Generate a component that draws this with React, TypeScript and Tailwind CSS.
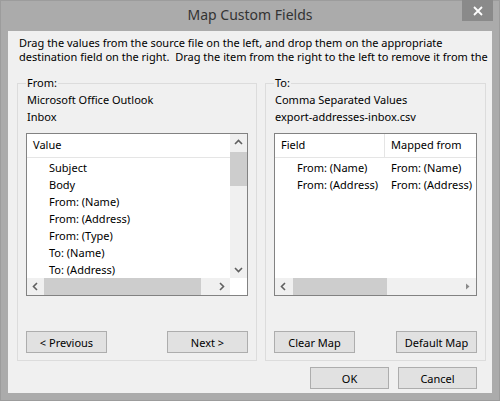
import React from "react";

const font = "font-['Segoe_UI','Noto_Sans',sans-serif]";

function Chevron({ dir, className = "" }: { dir: "up" | "down" | "left" | "right"; className?: string }) {
  const pts = {
    up: "1,6 4.5,2.5 8,6",
    down: "1,3 4.5,6.5 8,3",
    left: "6,1 2.5,4.5 6,8",
    right: "3,1 6.5,4.5 3,8",
  }[dir];
  return (
    <svg width="9" height="9" viewBox="0 0 9 9" className={className}>
      <polyline points={pts} fill="none" stroke="#606060" strokeWidth="1.6" />
    </svg>
  );
}

function HScroll({ thumbLeft, thumbWidth, dimRight }: { thumbLeft: number; thumbWidth: number; dimRight?: boolean }) {
  return (
    <div className="h-[17px] bg-[#f0f0f0] flex items-center flex-1">
      <div className="w-[17px] flex justify-center"><Chevron dir="left" /></div>
      <div className="flex-1 h-full relative">
        <div className="absolute top-0 h-full bg-[#cdcdcd]" style={{ left: thumbLeft, width: thumbWidth }} />
      </div>
      <div className="w-[17px] flex justify-center">
        {dimRight ? (
          <svg width="9" height="9" viewBox="0 0 9 9"><polygon points="3,1.5 6.5,4.5 3,7.5" fill="#8a8a8a" /></svg>
        ) : (
          <Chevron dir="right" />
        )}
      </div>
    </div>
  );
}

function Btn({ children, w = "w-[81px]" }: { children: React.ReactNode; w?: string }) {
  return (
    <button className={`${w} h-[22px] bg-[#e1e1e1] border border-[#adadad] text-[11px] leading-none text-black`}>
      {children}
    </button>
  );
}

function Group({ legend, children, className = "" }: { legend: string; children: React.ReactNode; className?: string }) {
  return (
    <fieldset className={`border border-[#dcdcdc] pt-0 px-[8px] pb-[7px] flex flex-col ${className}`}>
      <legend className="px-[1px] leading-[14px]">{legend}</legend>
      {children}
    </fieldset>
  );
}

const sourceItems = ["Subject", "Body", "From: (Name)", "From: (Address)", "From: (Type)", "To: (Name)", "To: (Address)"];
const mapped = [
  ["From: (Name)", "From: (Name)"],
  ["From: (Address)", "From: (Address)"],
];

export default function App() {
  return (
    <div className={`w-[500px] h-[401px] bg-[#ababab] border border-[#9c9c9c] flex flex-col ${font} text-[11px] text-black`}>
      <div className="h-[30px] shrink-0 relative flex items-center justify-center">
        <span className="text-[14px] text-[#333] -mt-[3px]">Map Custom Fields</span>
        <button className="absolute right-[6px] -top-px w-[31px] h-[21px] bg-[#8a8a8a] flex items-center justify-center">
          <svg width="10" height="10" viewBox="0 0 10 10">
            <path d="M1 1 L9 9 M9 1 L1 9" stroke="#fff" strokeWidth="1.8" />
          </svg>
        </button>
      </div>
      <div className="mx-[7px] mb-[7px] flex-1 min-h-0 bg-[#f0f0f0] flex flex-col">
        <div className="pl-[11px] pt-[5px] leading-[14px] whitespace-nowrap overflow-hidden">
          <div>Drag the values from the source file on the left, and drop them on the appropriate</div>
          <div>destination field on the right.&nbsp; Drag the item from the right to the left to remove it from the</div>
        </div>
        <div className="flex gap-[8px] pl-[9px] pr-[6px] mt-[12px]">
          <Group legend="From:" className="w-[240px]">
            <div className="pl-[1px] leading-[17px] mt-[1px]">
              <div>Microsoft Office Outlook</div>
              <div>Inbox</div>
            </div>
            <div className="mt-[8px] h-[163px] border border-[#828282] bg-white flex flex-col">
              <div className="flex flex-1 min-h-0">
                <div className="flex-1">
                  <div className="h-[24px] border-b border-[#e5e5e5] flex items-center pl-[6px]">Value</div>
                  <div className="pt-[2px]">
                    {sourceItems.map((s) => (
                      <div key={s} className="h-[17px] flex items-center pl-[22px] whitespace-nowrap">{s}</div>
                    ))}
                  </div>
                </div>
                <div className="w-[17px] bg-[#f0f0f0] flex flex-col items-center">
                  <div className="h-[17px] flex items-center"><Chevron dir="up" /></div>
                  <div className="w-full h-[34px] mt-[1px] bg-[#cdcdcd]" />
                  <div className="flex-1" />
                  <div className="h-[17px] flex items-center"><Chevron dir="down" /></div>
                </div>
              </div>
              <div className="flex">
                <HScroll thumbLeft={0} thumbWidth={157} />
                <div className="w-[17px] bg-white" />
              </div>
            </div>
            <div className="flex justify-between mt-[35px]">
              <Btn>&lt; Previous</Btn>
              <Btn>Next &gt;</Btn>
            </div>
          </Group>
          <Group legend="To:" className="flex-1">
            <div className="pl-[1px] leading-[17px] mt-[1px]">
              <div>Comma Separated Values</div>
              <div>export-addresses-inbox.csv</div>
            </div>
            <div className="mt-[8px] h-[163px] border border-[#828282] bg-white flex flex-col">
              <div className="flex-1 overflow-hidden">
                <div className="h-[24px] border-b border-[#e5e5e5] flex whitespace-nowrap">
                  <div className="w-[110px] shrink-0 border-r border-[#e5e5e5] flex items-center pl-[6px]">Field</div>
                  <div className="flex items-center pl-[6px]">Mapped from</div>
                </div>
                <div className="pt-[2px]">
                  {mapped.map(([a, b]) => (
                    <div key={a} className="h-[17px] flex items-center whitespace-nowrap">
                      <div className="w-[116px] shrink-0 pl-[22px]">{a}</div>
                      <div>{b}</div>
                    </div>
                  ))}
                </div>
              </div>
              <div className="flex">
                <HScroll thumbLeft={1} thumbWidth={94} dimRight />
              </div>
            </div>
            <div className="flex justify-between mt-[35px]">
              <Btn>Clear Map</Btn>
              <Btn>Default Map</Btn>
            </div>
          </Group>
        </div>
        <div className="flex justify-end gap-[9px] pr-[15px] mt-[6px]">
          <Btn w="w-[79px]">OK</Btn>
          <Btn w="w-[79px]">Cancel</Btn>
        </div>
      </div>
    </div>
  );
}
